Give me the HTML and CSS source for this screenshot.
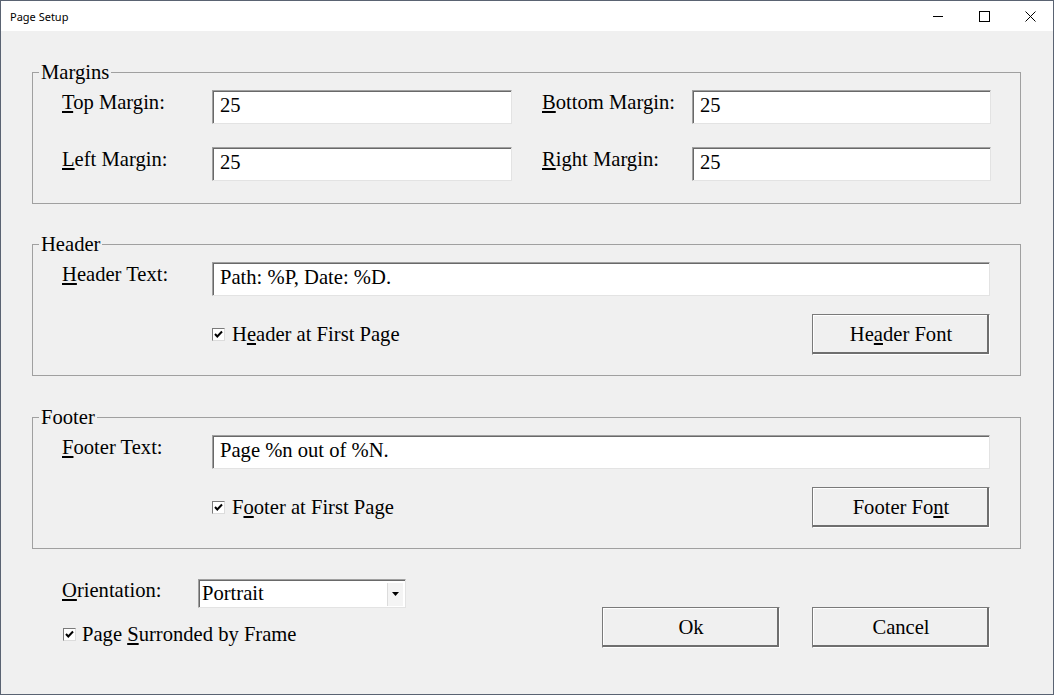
FILE: index.html
```html
<!DOCTYPE html>
<html lang="en">
<head>
<meta charset="utf-8">
<title>Page Setup</title>
<link rel="stylesheet" href="styles.css">
</head>
<body>
<div class="window">
  <div class="titlebar">
    <span class="title">Page Setup</span>
    <div class="controls">
      <span class="ctl"><svg width="10" height="10" viewBox="0 0 10 10"><path d="M0 5.5H10" stroke="#000" stroke-width="1"/></svg></span>
      <span class="ctl"><svg width="11" height="11" viewBox="0 0 11 11"><rect x="0.5" y="0.5" width="10" height="10" fill="none" stroke="#000" stroke-width="1"/></svg></span>
      <span class="ctl"><svg width="11" height="11" viewBox="0 0 11 11"><path d="M0.5 0.5L10.5 10.5M10.5 0.5L0.5 10.5" stroke="#000" stroke-width="1"/></svg></span>
    </div>
  </div>
  <div class="content">
    <fieldset class="group first">
      <legend>Margins</legend>
      <div class="margins-grid">
        <label class="lbl"><u>T</u>op Margin:</label>
        <input class="field col-a" type="text" value="25">
        <label class="lbl"><u>B</u>ottom Margin:</label>
        <input class="field" type="text" value="25">
        <label class="lbl"><u>L</u>eft Margin:</label>
        <input class="field col-a" type="text" value="25">
        <label class="lbl"><u>R</u>ight Margin:</label>
        <input class="field" type="text" value="25">
      </div>
    </fieldset>

    <fieldset class="group">
      <legend>Header</legend>
      <div class="group-body">
        <div class="text-row">
          <label class="lbl wide"><u>H</u>eader Text:</label>
          <input class="field grow" type="text" value="Path: %P, Date: %D.">
        </div>
        <div class="opt-row">
          <span class="check"><span class="box"><svg width="9" height="9" viewBox="0 0 9 9"><path d="M1 4L3.3 6.5L8 1.5" fill="none" stroke="#000" stroke-width="2"/></svg></span><span>H<u>e</u>ader at First Page</span></span>
          <button class="btn" type="button">He<u>a</u>der Font</button>
        </div>
      </div>
    </fieldset>

    <fieldset class="group">
      <legend>Footer</legend>
      <div class="group-body">
        <div class="text-row">
          <label class="lbl wide"><u>F</u>ooter Text:</label>
          <input class="field grow" type="text" value="Page %n out of %N.">
        </div>
        <div class="opt-row">
          <span class="check"><span class="box"><svg width="9" height="9" viewBox="0 0 9 9"><path d="M1 4L3.3 6.5L8 1.5" fill="none" stroke="#000" stroke-width="2"/></svg></span><span>F<u>o</u>oter at First Page</span></span>
          <button class="btn" type="button">Footer Fo<u>n</u>t</button>
        </div>
      </div>
    </fieldset>

    <div class="bottom">
      <div class="bottom-left">
        <div class="orient-row">
          <label class="lbl orient"><u>O</u>rientation:</label>
          <div class="combo">
            <span class="combo-text">Portrait</span>
            <span class="combo-btn"><svg width="7" height="4" viewBox="0 0 7 4"><path d="M0 0H7L3.5 4Z" fill="#000"/></svg></span>
          </div>
        </div>
        <span class="check frame-check"><span class="box"><svg width="9" height="9" viewBox="0 0 9 9"><path d="M1 4L3.3 6.5L8 1.5" fill="none" stroke="#000" stroke-width="2"/></svg></span><span>Page <u>S</u>urronded by Frame</span></span>
      </div>
      <div class="actions">
        <button class="btn" type="button">Ok</button>
        <button class="btn" type="button">Cancel</button>
      </div>
    </div>
  </div>
</div>
</body>
</html>
```

FILE: styles.css
```css
html, body {
  margin: 0;
  padding: 0;
  background: #f0f0f0;
}

.window {
  box-sizing: border-box;
  width: 1054px;
  height: 695px;
  border: 1px solid #5a6372;
  background: #f0f0f0;
  display: flex;
  flex-direction: column;
  font-family: "Liberation Serif", "Times New Roman", serif;
  font-size: 20.6px;
  line-height: 23px;
  color: #000;
  overflow: hidden;
}

.titlebar {
  height: 30px;
  background: #fff;
  display: flex;
  align-items: center;
  justify-content: space-between;
  flex: none;
}

.title {
  font-family: "Noto Sans", "Liberation Sans", sans-serif;
  font-size: 11px;
  line-height: 14px;
  padding-left: 9px;
  padding-top: 2px;
}

.controls {
  display: flex;
  height: 30px;
}

.ctl {
  width: 46px;
  height: 30px;
  display: flex;
  align-items: center;
  justify-content: center;
}

.content {
  padding: 0 32px 0 31px;
  display: flex;
  flex-direction: column;
}

.group {
  margin: 29px 0 0 0;
  padding: 0;
  border: 1px solid #a0a0a0;
  min-inline-size: 0;
}

.group.first {
  margin-top: 30px;
}

.group + .group + .group {
  margin-top: 30px;
}

.group legend {
  margin-left: 6px;
  padding: 0 2px;
  line-height: 23px;
}

.margins-grid {
  display: grid;
  grid-template-columns: 150px 330px 150px 299px;
  row-gap: 23px;
  padding: 6px 0 22px 29px;
}

.margins-grid .col-a {
  margin-right: 30px;
}

.lbl {
  display: block;
  padding-top: 1px;
  line-height: 23px;
  white-space: nowrap;
}

.field {
  box-sizing: border-box;
  height: 34px;
  margin: 0;
  padding: 0 4px 4px 7px;
  font: inherit;
  line-height: 23px;
  color: #000;
  background: #fff;
  border: 1px solid;
  border-color: #a0a0a0 #e3e3e3 #e3e3e3 #a0a0a0;
  box-shadow: inset 1px 1px 0 #696969;
  outline: none;
  min-width: 0;
}

.group-body {
  padding: 6px 30px 20px 29px;
  display: flex;
  flex-direction: column;
}

.text-row {
  display: flex;
  align-items: flex-start;
}

.lbl.wide {
  width: 150px;
  flex: none;
}

.grow {
  flex: 1;
}

.opt-row {
  margin-top: 18px;
  padding-left: 150px;
  display: flex;
  align-items: center;
  justify-content: space-between;
}

.check {
  display: flex;
  align-items: center;
  white-space: nowrap;
}

.box {
  box-sizing: border-box;
  width: 13px;
  height: 13px;
  margin-right: 7px;
  border: 1px solid;
  border-color: #7a7a7a #dcdcdc #dcdcdc #7a7a7a;
  background: #fff;
  display: flex;
  align-items: center;
  justify-content: center;
  flex: none;
}

.btn {
  box-sizing: border-box;
  width: 178px;
  height: 41px;
  margin: 0;
  padding: 0;
  font: inherit;
  line-height: 23px;
  color: #000;
  background: #f0f0f0;
  border: 1px solid;
  border-color: #7a7a7a #fff #fff #7a7a7a;
  box-shadow: inset -2px -2px 0 #6f6f6f, inset 1px 1px 0 #fff;
  text-align: center;
}

.bottom {
  margin-top: 30px;
  padding: 0 31px 0 30px;
  display: flex;
  justify-content: space-between;
  align-items: flex-start;
}

.bottom-left {
  display: flex;
  flex-direction: column;
}

.orient-row {
  display: flex;
  align-items: flex-start;
}

.lbl.orient {
  width: 136px;
  flex: none;
  padding-top: 0;
}

.combo {
  box-sizing: border-box;
  width: 208px;
  height: 29px;
  display: flex;
  align-items: center;
  background: #fff;
  border: 1px solid;
  border-color: #a0a0a0 #e3e3e3 #e3e3e3 #a0a0a0;
  box-shadow: inset 1px 1px 0 #696969;
  padding: 1px 1px 0 3px;
}

.combo-text {
  flex: 1;
  line-height: 23px;
  align-self: flex-start;
  padding-top: 1px;
}

.combo-btn {
  box-sizing: border-box;
  width: 16px;
  height: 23px;
  margin-right: 1px;
  display: flex;
  align-items: center;
  justify-content: center;
  background: #f4f4f4;
  border-left: 1px solid #dcdcdc;
}

.frame-check {
  margin-top: 15px;
  padding-left: 1px;
}

.frame-check .box {
  margin-right: 6px;
}

.actions {
  margin-top: 28px;
  display: flex;
  gap: 32px;
}
```
